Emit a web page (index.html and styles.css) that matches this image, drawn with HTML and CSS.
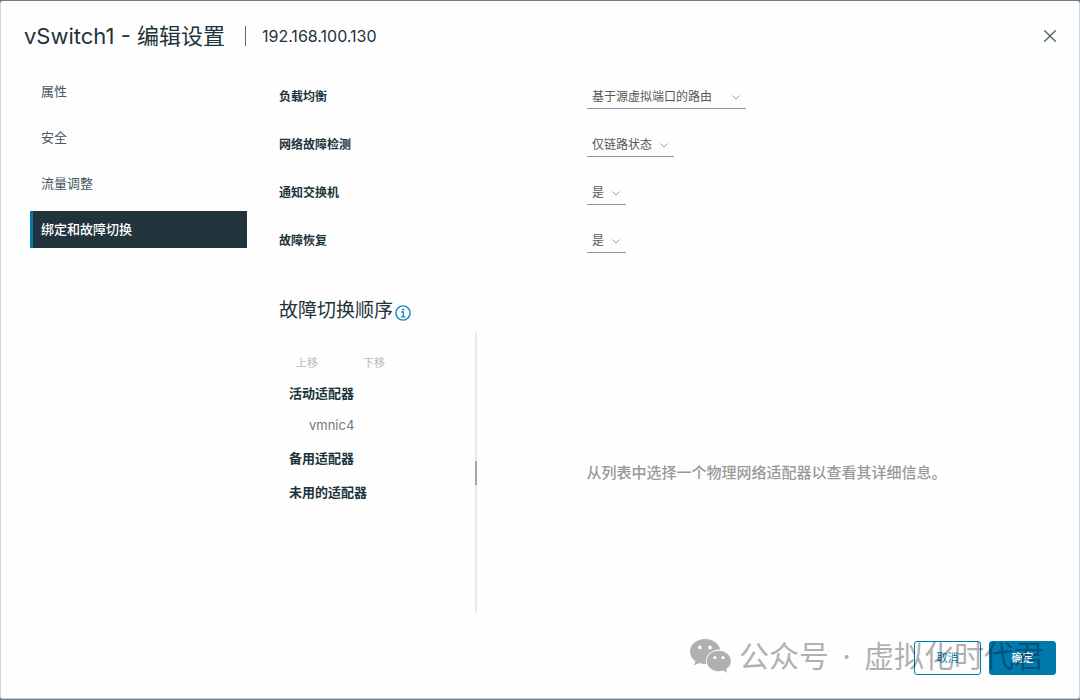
FILE: index.html
```html
<!DOCTYPE html>
<html lang="zh-CN">
<head>
<meta charset="utf-8">
<meta name="viewport" content="width=device-width, initial-scale=1">
<title>vSwitch1 - 编辑设置</title>
<link rel="stylesheet" href="styles.css">
</head>
<body>
<div class="dialog" role="dialog" aria-labelledby="dialog-title">
  <header class="dialog-header">
    <h1 class="dialog-title" id="dialog-title">vSwitch1 - 编辑设置</h1>
    <span class="dialog-host">192.168.100.130</span>
    <button class="close" type="button" aria-label="关闭">
      <svg viewBox="0 0 12 12" width="12" height="12"><path d="M.7.7l10.6 10.6M11.3.7L.7 11.3" fill="none" stroke="currentColor" stroke-width="1.3" stroke-linecap="round"/></svg>
    </button>
  </header>

  <div class="dialog-body">
    <nav class="steps">
      <button class="step" type="button">属性</button>
      <button class="step" type="button">安全</button>
      <button class="step" type="button">流量调整</button>
      <button class="step step-active" type="button" aria-current="page">绑定和故障切换</button>
    </nav>

    <main class="content">
      <div class="field">
        <label class="field-label" for="balance">负载均衡</label>
        <div class="select-wrap">
          <select class="select select-wide" id="balance"><option>基于源虚拟端口的路由</option></select>
          <svg class="chevron" viewBox="0 0 8 5" width="8" height="5"><path d="M.5.5L4 4.2 7.5.5"/></svg>
        </div>
      </div>
      <div class="field">
        <label class="field-label" for="detect">网络故障检测</label>
        <div class="select-wrap">
          <select class="select" id="detect"><option>仅链路状态</option></select>
          <svg class="chevron" viewBox="0 0 8 5" width="8" height="5"><path d="M.5.5L4 4.2 7.5.5"/></svg>
        </div>
      </div>
      <div class="field">
        <label class="field-label" for="notify">通知交换机</label>
        <div class="select-wrap">
          <select class="select" id="notify"><option>是</option></select>
          <svg class="chevron" viewBox="0 0 8 5" width="8" height="5"><path d="M.5.5L4 4.2 7.5.5"/></svg>
        </div>
      </div>
      <div class="field">
        <label class="field-label" for="failback">故障恢复</label>
        <div class="select-wrap">
          <select class="select" id="failback"><option>是</option></select>
          <svg class="chevron" viewBox="0 0 8 5" width="8" height="5"><path d="M.5.5L4 4.2 7.5.5"/></svg>
        </div>
      </div>

      <h2 class="section-title">故障切换顺序
        <svg class="info" viewBox="0 0 16 16" width="16" height="16"><circle cx="8" cy="8" r="7.1" fill="none" stroke="currentColor" stroke-width="1.4"/><circle cx="8" cy="4.5" r="1.1" fill="currentColor"/><path d="M6.3 7h2v4.8M6 11.8h4.4" fill="none" stroke="currentColor" stroke-width="1.3"/></svg>
      </h2>

      <div class="split">
        <section class="adapters">
          <div class="moves">
            <button class="move" type="button" disabled>上移</button>
            <button class="move" type="button" disabled>下移</button>
          </div>
          <h3 class="group">活动适配器</h3>
          <ul class="nics"><li class="nic">vmnic4</li></ul>
          <h3 class="group">备用适配器</h3>
          <h3 class="group">未用的适配器</h3>
        </section>
        <div class="divider"><span class="grip"></span></div>
        <p class="placeholder">从列表中选择一个物理网络适配器以查看其详细信息。</p>
      </div>
    </main>
  </div>

  <footer class="dialog-footer">
    <button class="btn btn-outline" type="button">取消</button>
    <button class="btn btn-primary" type="button">确定</button>
    <div class="watermark">
      <svg class="wechat" viewBox="0 0 42 34" width="42" height="34">
        <path fill-rule="evenodd" d="M15 0C6.7 0 0 5.6 0 12.6c0 4 2.2 7.500 5.500 9.800L4.200 26.500l5-2.500c1.700.6 3.800.9 5.800.9h1.300a10 10 0 0 1-.4-2.900C15.900 15.600 22 10.400 29.400 10.400h.7C29 4.500 22.700 0 15 0zM9.800 6.500a1.900 1.900 0 1 1 0 3.800 1.900 1.900 0 0 1 0-3.800zM20 6.500a1.900 1.900 0 1 1 0 3.800 1.900 1.900 0 0 1 0-3.800z"/>
        <path fill-rule="evenodd" d="M28.800 11.700c-6.800 0-12.100 4.600-12.100 10.300s5.300 10.300 12.100 10.300c1.600 0 3-.2 4.300-.7l4.200 2.200-1.200-3.700c3-1.900 4.800-4.800 4.800-8.100 0-5.700-5.400-10.300-12.100-10.300zM24.800 17a1.600 1.600 0 1 1 0 3.200 1.600 1.600 0 0 1 0-3.200zM33 17a1.600 1.600 0 1 1 0 3.200 1.600 1.600 0 0 1 0-3.200z"/>
      </svg>
      <span>公众号</span><span class="dot">·</span><span>虚拟化时代君</span>
    </div>
  </footer>
</div>
</body>
</html>
```
FILE: styles.css
```css
* { box-sizing: border-box; }

body {
  margin: 0;
  padding: 1px 0;
  background: #737b7e;
  color: #21333b;
  font: 13px/20px "Inter", "Noto Sans CJK SC", sans-serif;
}

button, select { font: inherit; }
h1, h2, h3, p, ul { margin: 0; padding: 0; font-weight: 400; }

.dialog {
  display: flex;
  flex-direction: column;
  min-height: calc(100vh - 2px);
  background: #fefefe;
  border: 1px solid #cdd7db;
  border-top: 0;
  border-radius: 3px;
}

.dialog-header {
  display: flex;
  align-items: center;
  height: 71px;
  padding: 0 22px 2px 23px;
}

.dialog-title {
  padding-right: 20px;
  font-size: 22px;
  line-height: 32px;
}

.dialog-host {
  flex: 1;
  padding-left: 16px;
  border-left: 1px solid #5c6b72;
  font-size: 16px;
}

.close {
  display: flex;
  padding: 1px;
  border: 0;
  background: none;
  color: #4a5d66;
}

.dialog-body {
  display: flex;
  flex: 1;
  gap: 32px;
  padding: 1px 23px 0 29px;
}

.steps {
  display: flex;
  flex-direction: column;
  gap: 9px;
  width: 217px;
}

.step {
  height: 37px;
  padding: 0 8px 2px;
  border: 0;
  border-left: 3px solid transparent;
  background: none;
  color: #465860;
  text-align: left;
}

.step-active {
  border-left-color: #0079ad;
  background: #21333b;
  color: #fff;
  font-weight: 500;
}

.content { flex: 1; }

.field {
  display: grid;
  grid-template-columns: 308px 1fr;
  align-items: center;
  height: 48px;
  font-size: 12px;
}

.field-label { font-weight: 700; }

.select-wrap {
  position: relative;
  justify-self: start;
}

.select {
  display: block;
  height: 24px;
  padding: 0 21px 0 5px;
  border: 0;
  border-bottom: 1px solid #8195a0;
  border-radius: 0;
  background: none;
  color: #565656;
  appearance: none;
}

.select-wide { min-width: 159px; }

.chevron {
  position: absolute;
  top: 10px;
  right: 6px;
  fill: none;
  stroke: #9a9a9a;
  pointer-events: none;
}

.section-title {
  display: flex;
  align-items: center;
  gap: 2px;
  margin: 30px 0 6px;
  font-size: 19px;
  line-height: 32px;
}

.info { margin-top: 4px; color: #0f86b8; }

.split { display: flex; min-height: 280px; }

.adapters { width: 196px; padding: 20px 10px; }

.moves { display: flex; gap: 45px; margin: 0 0 10px 7px; }

.move {
  padding: 0;
  border: 0;
  background: none;
  color: #b3babd;
  font-size: 11px;
}

.group {
  margin-bottom: 14px;
  font-size: 13px;
  font-weight: 700;
}

.nics { margin: -2px 0 13px; padding-left: 20px; list-style: none; }
.nic { color: #777; }

.divider {
  display: flex;
  align-items: center;
  width: 2px;
  background: #e9e9e9;
}

.grip { width: 2px; height: 24px; background: #a5a5a5; }

.placeholder {
  flex: 1;
  align-self: center;
  color: #999;
  font-size: 15px;
  font-weight: 500;
  text-align: center;
}

.dialog-footer {
  position: relative;
  display: flex;
  justify-content: flex-end;
  gap: 8px;
  padding: 28px 23px 23px;
}

.btn {
  width: 67px;
  height: 34px;
  padding: 0;
  border: 1px solid #0079ad;
  border-radius: 3px;
  font-size: 11px;
}

.btn-outline { background: none; color: #0079ad; }
.btn-primary { background: #0079ad; color: #fff; font-weight: 500; }

.watermark {
  position: absolute;
  right: 35px;
  bottom: 20px;
  display: flex;
  align-items: center;
  color: #000;
  font-size: 30px;
  line-height: 44px;
  opacity: 0.3;
  pointer-events: none;
}

.wechat { margin-right: 7px; fill: currentColor; }
.dot { width: 35px; text-align: center; }
```
